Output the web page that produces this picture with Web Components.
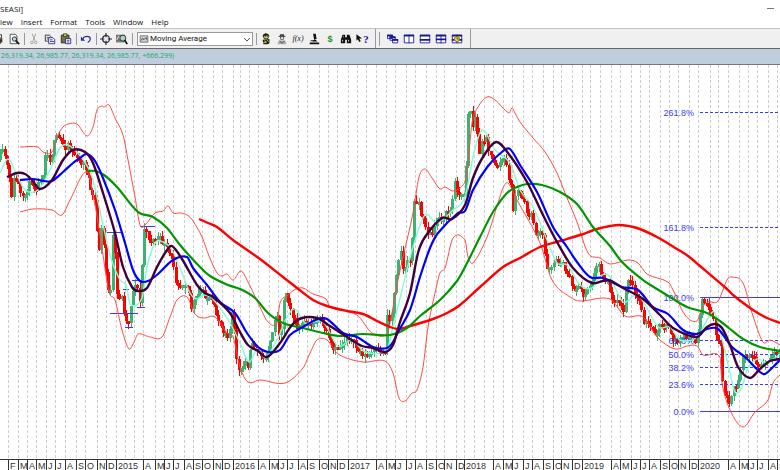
<!DOCTYPE html>
<html lang="en">
<head>
<meta charset="utf-8">
<title>SEASI</title>
<style>
  body {
    margin: 0;
    background: #fff;
    font-family: "Open Sans", "Noto Sans", sans-serif;
    font-size: 8px;
    color: #111;
    overflow: hidden;
  }
</style>
</head>
<body>
<chart-app></chart-app>

<script>
// ---------- icons, all on a 14x14 grid ----------
const ICONS = {
  print: '<path d="M3 6h9v5H3z" fill="#333"/><path d="M5 2h6v4H5zM5 9h5v3H5z" fill="#fff" stroke="#222"/><path d="M10 7h1" stroke="#dd0"/>',
  preview: '<path d="M2.500 1.500h6l2 2v9h-8z" fill="#fff" stroke="#444"/><circle cx="7.500" cy="7" r="2.500" fill="#b8dede" stroke="#222"/><path d="M9 9l4 4" stroke="#111" stroke-width="2"/>',
  cut: '<path d="M5 1l3 8M9 1L6 9" stroke="#999" fill="none"/><circle cx="4.500" cy="11" r="1.500" fill="none" stroke="#999"/><circle cx="9" cy="11" r="1.500" fill="none" stroke="#999"/>',
  copy: '<path d="M1.500 2.500h5l2 2v5h-7z" fill="#fff" stroke="#223"/><path d="M3 5h4M3 7h4" stroke="#335"/><path d="M5.500 5.500h5l2 2v5h-7z" fill="#fff" stroke="#228"/><path d="M7 8h3M7 10h5" stroke="#228"/>',
  paste: '<path d="M1.500 2.500h9v9h-9z" fill="#77763a" stroke="#222"/><path d="M4 1h4v3H4z" fill="#dcd64c" stroke="#333"/><path d="M6.500 6.500h6v6h-6z" fill="#fff" stroke="#228"/><path d="M8 8.500h3M8 10.500h3" stroke="#228"/>',
  undo: '<path d="M3 7c2-4 9-4 9 0 0 2-1 3-3 4" fill="none" stroke="#2a2f9c" stroke-width="1.400"/><path d="M1 4v5h5z" fill="#2a2f9c"/>',
  cross: '<circle cx="7" cy="7" r="4" fill="none" stroke="#223" stroke-width="1.200"/><path d="M7 0v5M7 9v5M0 7h5M9 7h5" stroke="#223" stroke-width="1.400"/>',
  zoom: '<path d="M0 2h10v9H0z" fill="#777"/><path d="M1 8l2-4 2 3 2-3" stroke="#eee" fill="none"/><circle cx="8" cy="6" r="3.500" fill="#a9d4c8" stroke="#222"/><path d="M10 8l3 5" stroke="#111" stroke-width="2"/>',
  expert: '<circle cx="7" cy="4" r="3" fill="#d9d050" stroke="#222"/><path d="M3 4c0-4 7-5 8 0L9 3z" fill="#222"/><path d="M3 8l8-1v5l-2 1H4z" fill="#222"/><path d="M5 9l3 2M8 8l2 2M4 11h3" stroke="#e5d92d"/><path d="M6 4h1M8 4h1" stroke="#222"/>',
  explorer: '<path d="M3 4h8M5 2h4v2H5z" stroke="#333" fill="#555"/><circle cx="7" cy="6" r="2" fill="#ddd" stroke="#555"/><path d="M2 13c0-4 2-5 5-4 3-1 5 0 5 4z" fill="#aaa"/><path d="M4 9l3 3 3-3" stroke="#444" fill="none"/>',
  tester: '<path d="M6 1h3l1 6H7zM2 11h11v2H2zM8 7l3 3H5z" fill="#111"/><path d="M3 9h5" stroke="#111"/>',
  find: '<path d="M3 2h3v3h2V2h3l2 6v4H8V8H6v4H1V8z" fill="#111"/><path d="M3 8v2M10 8v2M4 4v1" stroke="#eee"/>',
  cascade: '<path d="M.5 2.500h6v4h-6zM3.500 4.500h6v4h-6zM6.500 7.500h6v4h-6z" fill="#fff" stroke="#17188e"/><path d="M0 3h7M3 5h7M6 8h7" stroke="#17188e" stroke-width="2"/>',
  tilev: '<path d="M1.500 2.500h11v9h-11zM7 2v10" fill="#fff" stroke="#17188e"/><path d="M1 3h12" stroke="#17188e" stroke-width="2"/>',
  tileh: '<path d="M1.500 2.500h11v9h-11z" fill="#fff" stroke="#17188e"/><path d="M1 3h12M1 8h12" stroke="#17188e" stroke-width="2"/>',
  grid: '<path d="M1.500 2.500h11v9h-11zM7 2v10" fill="#fff" stroke="#17188e"/><path d="M1 3h12M1 7.500h12" stroke="#17188e" stroke-width="2"/>',
  layout: '<path d="M1.500 2.500h11v9h-11zM7 2v10" fill="#fff" stroke="#17188e"/><path d="M1 3h12M1 8h12" stroke="#17188e" stroke-width="2"/><circle cx="7" cy="7" r="3" fill="#f1e02c" stroke="#776b12"/><path d="M7 5v2h2" stroke="#443" fill="none"/>',
  chart: '<path d="M1.500 2.500h11v9h-11z" fill="#ccc" stroke="#555"/><path d="M3 9l2-3 2 2 3-3 1 3" fill="none" stroke="#222"/>',
  pointer: '<path d="M2 1v9l2-2 2 4 2-1-2-4h4z" fill="#111"/>'
};
const svgIcon = name => `<svg viewBox="0 0 14 14" aria-hidden="true">${ICONS[name]}</svg>`;

// ---------- frame ----------
class ChartApp extends HTMLElement {
  constructor() {
    super();
    this.attachShadow({ mode: 'open' }).innerHTML = `
      <style>
        :host { display: flex; flex-direction: column; min-height: 100vh; }
      </style>
      <title-bar>SEASI]</title-bar>
      <menu-bar items="iew,Insert,Format,Tools,Window,Help"></menu-bar>
      <tool-bar></tool-bar>
      <quote-strip>26,319.34, 26,985.77, 26,319.34, 26,985.77, +666.299)</quote-strip>
      <price-chart></price-chart>`;
  }
}

class TitleBar extends HTMLElement {
  constructor() {
    super();
    this.attachShadow({ mode: 'open' }).innerHTML = `
      <style>
        :host { display: flex; justify-content: space-between; align-items: center; height: 16px; }
        button { width: 20px; height: 14px; padding: 0; border: 0; background: none; display: flex; align-items: center; justify-content: center; }
        i { width: 7px; height: 1px; background: #777; }
      </style>
      <span><slot></slot></span>
      <button aria-label="Minimize"><i></i></button>`;
  }
}

class MenuBar extends HTMLElement {
  connectedCallback() {
    const items = this.getAttribute('items').split(',');
    this.attachShadow({ mode: 'open' }).innerHTML = `
      <style>
        :host { display: block; height: 12px; }
        nav { display: flex; gap: 8px; }
        button { font: inherit; line-height: 12px; color: inherit; border: 0; padding: 0; background: none; }
      </style>
      <nav>${items.map(t => `<button>${t}</button>`).join('')}</nav>`;
  }
}

class QuoteStrip extends HTMLElement {
  constructor() {
    super();
    this.attachShadow({ mode: 'open' }).innerHTML = `
      <style>
        :host {
          display: block; height: 15px; line-height: 13px; font-size: 7px; padding-left: 1px;
          color: #22a86c; background: #bfcddc; white-space: nowrap;
          border-top: 1px solid #666; border-bottom: 1px solid #777;
        }
      </style>
      <slot></slot>`;
  }
}

class ToolButton extends HTMLElement {
  connectedCallback() {
    const icon = this.getAttribute('icon');
    this.attachShadow({ mode: 'open' }).innerHTML = `
      <style>
        :host { display: block; flex: none; width: 16px; }
        button { display: flex; align-items: center; justify-content: center; width: 100%; height: 16px; padding: 0; border: 0; background: none; font: inherit; color: inherit; }
        svg { width: 12px; height: 12px; }
      </style>
      <button aria-label="${this.getAttribute('label')}">${icon ? svgIcon(icon) : '<slot></slot>'}</button>`;
  }
}

class ToolBar extends HTMLElement {
  constructor() {
    super();
    this.attachShadow({ mode: 'open' }).innerHTML = `
      <style>
        :host { display: flex; align-items: center; height: 19px; background: #f0f0f0; border-top: 1px solid #c2c2c2; overflow: hidden; }
        .first { margin-left: -10px; }
        hr { flex: none; width: 1px; height: 12px; margin: 0 1px 0 2px; border: 0; background: #999; }
        hr.end { height: 19px; margin: 0 3px 0 5px; }
        hr.grip { height: 14px; margin: 0 5px 0 0; }
        .combo { display: flex; align-items: center; gap: 1px; flex: none; width: 116px; height: 14px; box-sizing: border-box; margin: 0 1px 0 3px; padding-left: 1px; border: 1px solid #999; background: #fff; }
        .combo svg { width: 10px; height: 10px; flex: none; }
        select { flex: 1; min-width: 0; height: 12px; padding: 0; border: 0; background: none; appearance: none; font: 8px Roboto, "Liberation Sans", sans-serif; color: #111; }
        .combo svg.arrow { width: 8px; height: 8px; margin-right: 1px; pointer-events: none; }
        .fx { font: italic 8px "Liberation Serif", serif; color: #222; }
        .dollar { font: bold 9px "Liberation Sans", sans-serif; color: #109618; }
        .help { display: flex; align-items: center; font: bold 11px "Liberation Serif", serif; color: #17188e; }
        .help svg { width: 10px; height: 11px; margin-right: -2px; }
      </style>
      <tool-button class="first" icon="print" label="Print"></tool-button>
      <tool-button icon="preview" label="Print preview"></tool-button>
      <hr>
      <tool-button icon="cut" label="Cut"></tool-button>
      <tool-button icon="copy" label="Copy"></tool-button>
      <tool-button icon="paste" label="Paste"></tool-button>
      <hr>
      <tool-button icon="undo" label="Undo"></tool-button>
      <hr>
      <tool-button icon="cross" label="Crosshair"></tool-button>
      <tool-button icon="zoom" label="Zoom"></tool-button>
      <hr>
      <div class="combo">
        ${svgIcon('chart')}
        <select aria-label="Indicator"><option>Moving Average</option></select>
        <svg class="arrow" viewBox="0 0 8 8"><path d="M1 3l3 3 3-3" fill="none" stroke="#555"/></svg>
      </div>
      <hr>
      <tool-button icon="expert" label="Expert advisor"></tool-button>
      <tool-button icon="explorer" label="Explorer"></tool-button>
      <tool-button label="Indicator builder"><span class="fx">f(x)</span></tool-button>
      <tool-button icon="tester" label="System tester"></tool-button>
      <tool-button label="Options"><span class="dollar">$</span></tool-button>
      <tool-button icon="find" label="Find"></tool-button>
      <tool-button label="Context help"><span class="help">${svgIcon('pointer')}?</span></tool-button>
      <hr class="end"><hr class="grip">
      <tool-button icon="cascade" label="Cascade"></tool-button>
      <tool-button icon="tilev" label="Tile columns"></tool-button>
      <tool-button icon="tileh" label="Tile rows"></tool-button>
      <tool-button icon="grid" label="Tile grid"></tool-button>
      <tool-button icon="layout" label="Layout"></tool-button>
      <hr class="end">`;
  }
}

// ---------- chart data (plot units, y grows downward) ----------
const PRICE = '0,155 4,150 7,167 11,195 13,180 17,180 21,200 24,198 28,185 32,182 35,190 40,180 43,172 45,152 51,160 55,138 60,139 64,148 68,143 73,153 77,160 82,163 87,168 90,193 93,195 96,205 98,258 101,230 104,245 107,285 110,292 112,240 114,235 117,295 122,298 127,327 130,310 134,285 136,280 138,300 141,305 143,226 147,237 153,240 158,237 163,243 168,252 172,260 176,280 180,285 184,280 188,285 191,308 195,300 202,288 206,297 212,303 217,317 223,330 229,337 232,313 235,343 237,371 242,372 244,360 248,366 250,347 255,345 260,353 263,361 267,353 271,340 273,330 276,310 279,332 282,325 285,288 288,300 293,317 297,327 303,324 310,326 318,317 323,324 328,338 333,351 340,346 347,337 353,343 358,351 367,357 373,350 382,353 385,350 387,315 391,326 393,303 395,280 398,257 401,250 403,270 407,263 411,257 414,203 418,197 421,215 425,225 429,235 433,233 437,217 442,218 450,210 455,183 460,198 465,190 468,112 471,110 473,127 475,117 479,153 483,140 486,135 488,150 493,162 498,167 503,157 508,173 511,187 513,211 516,187 522,198 527,213 532,217 537,238 541,230 544,247 547,267 553,263 562,260 564,271 570,275 572,287 580,287 583,298 587,287 592,283 595,263 599,265 602,277 608,280 612,302 617,297 623,312 627,282 630,282 635,295 640,302 643,320 650,327 655,335 660,325 667,325 670,337 677,342 683,335 690,338 697,342 701,302 705,300 708,310 713,322 717,340 720,343 722,383 727,400 729,407 732,393 737,383 742,367 743,355 748,353 753,358 758,367 765,363 772,357 780,351';

const LINES = [
  { cls: 'band', pts: '20,147 38,147 43,152 52,152 58,135 63,127 68,124 77,124 87,136 93,127 97,110 102,106 104,107 109,105 115,118 123,135 128,160 135,197 140,225 145,225 155,213 163,211 168,206 173,213 180,213 187,215 193,221 202,237 209,256 217,273 222,276 227,274 233,280 241,271 248,282 260,307 268,322 277,323 280,303 288,295 296,289 303,288 313,294 326,299 330,307 357,315 372,333 387,334 391,318 398,280 403,257 413,213 419,177 425,169 432,178 440,189 445,187 453,191 463,185 467,173 472,123 478,107 487,97 495,100 509,113 512,108 515,113 520,122 533,138 545,152 557,173 565,193 577,222 588,253 600,258 610,264 628,260 638,263 647,274 668,282 673,290 685,315 697,321 702,308 708,302 718,301 727,280 732,277 743,283 752,313 763,342 770,340 780,345' },
  { cls: 'band', pts: '20,212 33,209 52,210 62,215 70,200 87,172 95,205 103,255 109,292 115,300 122,330 129,349 134,342 138,334 150,337 162,337 170,317 177,300 187,297 195,314 203,318 215,317 227,333 233,337 240,367 248,382 260,380 285,383 303,368 310,353 317,340 327,340 338,354 363,362 385,361 393,373 399,398 405,401 412,393 417,390 423,367 428,327 435,293 440,273 445,268 453,238 465,240 468,257 473,263 487,237 498,203 503,188 508,183 517,200 540,243 552,280 570,297 580,301 610,299 625,316 643,317 657,337 670,347 678,349 687,346 697,346 703,355 720,357 722,383 730,410 743,427 755,412 768,400 773,383 780,375' },
  { cls: 'fast', pts: '0,173 8,159 17,175 25,190 38,190 50,170 60,148 68,145 82,158 92,177 102,220 110,255 120,280 126,285 130,304 142,298 147,267 155,243 163,242 172,250 182,273 190,293 197,299 203,295 212,298 230,323 240,343 249,362 258,348 265,358 277,340 287,317 295,309 305,323 323,322 338,346 352,340 365,352 387,350 391,335 402,290 413,247 425,215 437,223 453,210 465,197 473,157 482,130 495,150 510,163 520,190 533,207 547,240 557,263 567,265 580,285 592,288 602,275 610,277 623,302 638,295 658,327 670,327 680,340 697,337 710,315 715,313 723,343 730,373 735,392 742,387 747,370 757,359 767,363 780,354' },
  { cls: 'long', pts: '199,219 208,223 217,227 233,240 260,259 283,277 297,288 313,300 327,306 347,311 363,314 377,321 390,327 398,329 407,327 433,319 447,313 460,305 480,287 503,267 520,258 540,247 560,241 580,235 597,229 610,226 620,225 637,228 657,237 677,249 688,256 700,266 727,289 733,295 753,310 767,318 780,323' },
  { cls: 'mid', pts: '87,171 95,171 104,175 117,187 138,212 153,217 167,228 180,245 200,267 210,276 228,285 240,289 255,298 268,313 283,323 303,328 323,333 340,336 363,334 390,335 407,328 420,316 440,300 457,281 467,263 480,237 493,212 507,193 517,187 527,184 542,185 560,192 577,204 593,227 610,246 622,262 643,280 657,289 670,297 687,307 707,313 720,321 730,329 743,339 760,347 780,351' },
  { cls: 'slow', pts: '20,180 33,179 44,181 52,181 63,172 73,163 80,158 87,154 95,161 103,178 115,210 125,243 133,270 140,281 148,281 158,274 173,260 187,257 193,268 207,285 220,302 235,313 247,333 258,347 268,352 280,350 290,335 303,327 318,319 327,319 343,333 357,337 373,347 387,348 393,342 398,332 410,310 420,277 430,248 438,233 458,213 465,211 473,190 488,166 503,151 510,149 520,165 537,192 553,227 567,247 577,262 590,277 603,278 622,287 638,290 653,307 668,314 683,330 697,334 707,329 718,329 732,347 745,357 760,372 765,374 773,367 780,360' },
  { cls: 'base', pts: '7,177 17,173 25,174 32,180 40,189 52,180 63,160 73,150 85,152 93,163 103,193 115,233 123,267 132,287 138,291 147,288 157,267 167,250 172,246 182,259 197,285 205,293 213,297 230,313 240,332 248,345 258,351 267,357 280,343 292,325 302,318 317,318 330,326 347,337 362,346 373,348 385,352 393,345 400,322 410,293 418,253 425,237 442,218 452,219 465,205 473,178 483,157 496,142 508,153 527,182 543,215 557,242 573,268 592,283 608,280 623,288 643,299 660,315 673,328 697,337 707,327 715,324 722,328 730,345 738,367 750,378 760,369 770,361 780,359' }
];

const FIB = [
  ['261.8%', 112], ['161.8%', 227], ['100.0%', 297, 1], ['61.8%', 340],
  ['50.0%', 354], ['38.2%', 367], ['23.6%', 384], ['0.0%', 411, 1]
];

// short support / resistance marks: x1, x2, y
const MARKS = [[107, 123, 232], [140, 155, 226], [132, 140, 280], [123, 129, 289], [137, 145, 307], [110, 138, 313], [125, 133, 327]];

const MONTHS = '8F 18M 27A 36M 46J 55J 65A 76S 85O 97N 106D 116=2015 125 134 143A 155M 164J 173J 184A 193S 202O 213N 222D 233=2016 240 249 258A 269M 278J 287J 298A 307S 319O 328N 337D 348=2017 357 366 376A 386M 395J 406J 415A 426S 436O 444N 456D 464=2018 474 484 493A 503M 512J 523J 532A 543S 553O 561N 572D 582=2019 590 600 611A 620M 631J 640J 649A 660S 669O 678N 689D 698=2020 710 718 728A 739M 748J 757J 768A 777S'
  .split(' ').map(s => { const m = s.match(/^(\d+)=?(.*)$/); return { x: +m[1], label: m[2] }; });

// the year labels start with digits, so "=" keeps them apart from x
const toPoints = s => s.split(' ').map(p => p.split(',').map(Number));

// points -> gently rounded path (Catmull-Rom as cubic segments)
function curve(pts) {
  let d = `M${pts[0]}`;
  for (let i = 0; i < pts.length - 1; i++) {
    const a = pts[i - 1] || pts[i], b = pts[i], c = pts[i + 1], e = pts[i + 2] || c;
    // control arms stay inside the segment so x never runs backwards
    const arm = (p, q) => {
      const w = (c[0] - b[0]) / 3;
      return [w, (q[1] - p[1]) / ((q[0] - p[0]) || 1) * w];
    };
    const [u, v] = arm(a, c), [s, t] = arm(b, e);
    d += `C${b[0] + u},${b[1] + v} ${c[0] - s},${c[1] - t} ${c}`;
  }
  return d;
}

class PriceChart extends HTMLElement {
  constructor() {
    super();
    this.attachShadow({ mode: 'open' });
  }

  connectedCallback() {
    this.render();
  }

  // weekly bars walked along the price path
  candles() {
    const p = toPoints(PRICE);
    const at = x => {
      let i = 1;
      while (i < p.length - 1 && p[i][0] < x) i++;
      const [x0, y0] = p[i - 1], [x1, y1] = p[i];
      return y0 + (y1 - y0) * (x - x0) / (x1 - x0);
    };
    let seed = 11;
    const rnd = () => (seed = (seed * 16807) % 2147483647) / 2147483647;
    let out = '', prev = 160;
    for (let n = 0; n * 2.25 < 780; n++) {
      const x = Math.round(n * 2.25);
      const y = Math.round(at(x) + (rnd() - .5) * 7);
      const top = Math.min(prev, y), h = Math.max(3, Math.abs(y - prev));
      const hi = top - Math.round(rnd() * 6), lo = top + h + Math.round(rnd() * 6);
      const cls = y <= prev ? 'up' : 'down';
      out += `<path class="${cls}" d="M${x} ${hi}h1v${lo - hi}h-1zM${x - 1} ${top}h3v${h}h-3z"/>`;
      prev = y;
    }
    return out;
  }

  render() {
    const grid = MONTHS.map(m => `M${m.x} 65V459`).join('');
    const ticks = MONTHS.filter(m => m.label).map(m => `M${m.x} 459V470`).join('');
    const labels = MONTHS.filter(m => m.label).map(m => `<text x="${m.x + 2}" y="469">${m.label}</text>`).join('');
    const fib = FIB.map(([t, y, solid]) =>
      `<path class="fib ${solid ? '' : 'dash'}" d="M700 ${y}H780"/>`).join('');
    const levels = FIB.map(([t, y]) => `<text class="level" x="694" y="${y + 4}">${t}</text>`).join('');
    this.shadowRoot.innerHTML = `
      <style>
        :host { display: block; background: #fff; }
        svg { display: block; width: 100%; }
        path { fill: none; }
        .crisp { shape-rendering: crispEdges; }
        .grid { stroke: #cecece; stroke-dasharray: 3 2; }
        .axis { stroke: #333; }
        text { font: 9px "Liberation Sans", Arial, sans-serif; fill: #333; }
        .level { fill: #3b3bf0; text-anchor: end; }
        .fib, .mark { stroke: #3a3aff; }
        .dash { stroke-dasharray: 3 2; }
        path.up { fill: #3cb371; }
        path.down { fill: #f00; }
        .band { stroke: #ff4a42; stroke-width: 1; }
        .fast { stroke: #7fffd4; stroke-width: 1.400; }
        .long { stroke: #f00; stroke-width: 2.400; }
        .mid { stroke: #009600; stroke-width: 2.200; }
        .slow { stroke: #00f; stroke-width: 2.200; }
        .base { stroke: #400040; stroke-width: 2.400; }
      </style>
      <svg viewBox="0 65 780 405" role="img" aria-label="Weekly price chart">
        <g class="crisp">
          <path class="grid" d="${grid}" transform="translate(.5 0)"/>
          ${this.candles()}
        </g>
        <g transform="translate(0 .5)" class="crisp">
          ${fib}
          <path class="mark" d="${MARKS.map(([a, b, y]) => `M${a} ${y}H${b}`).join('')}"/>
        </g>
        ${levels}
        ${LINES.map(l => `<path class="${l.cls}" d="${curve(toPoints(l.pts))}"/>`).join('')}
        <g class="crisp">
          <path class="axis" d="M0 459.500H780"/>
          <path class="axis" d="${ticks}" transform="translate(.5 0)"/>
        </g>
        ${labels}
      </svg>`;
  }
}

customElements.define('title-bar', TitleBar);
customElements.define('menu-bar', MenuBar);
customElements.define('quote-strip', QuoteStrip);
customElements.define('tool-button', ToolButton);
customElements.define('tool-bar', ToolBar);
customElements.define('price-chart', PriceChart);
customElements.define('chart-app', ChartApp);
</script>
</body>
</html>
